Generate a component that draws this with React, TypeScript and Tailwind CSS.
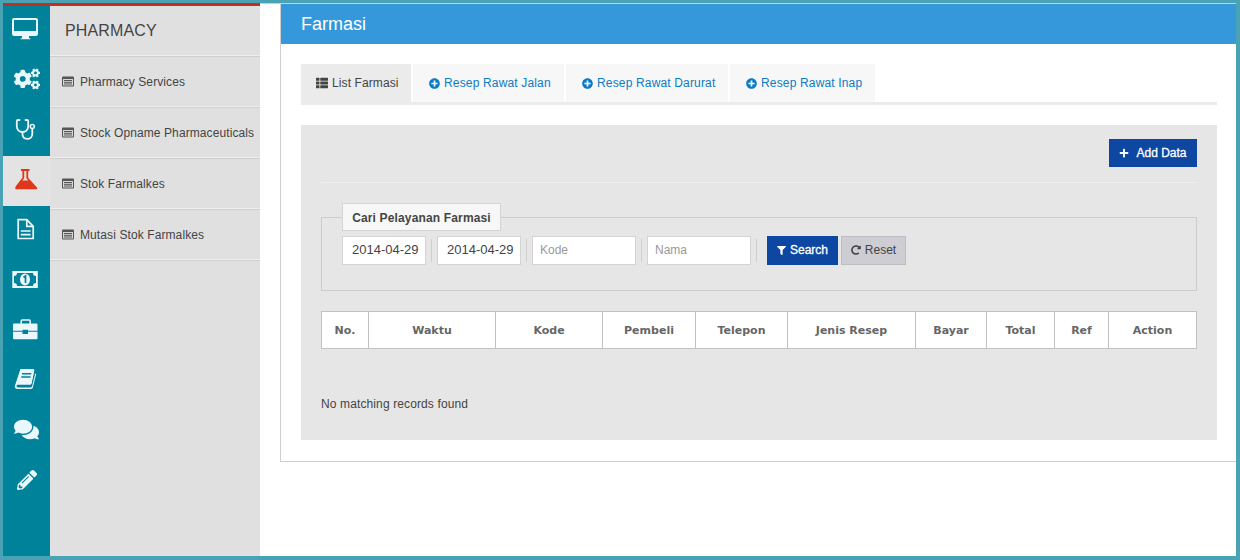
import React from "react";
import { FaCogs, FaComments, FaPencilAlt, FaThList, FaPlusCircle, FaFilter, FaRedoAlt, FaPlus } from "react-icons/fa";

const svgProps = { width: 47, height: 50, viewBox: "0 0 47 50", className: "block" };

const Desktop = () => (
  <svg {...svgProps} fill="currentColor">
    <path fillRule="evenodd" d="M11 12h22a2 2 0 0 1 2 2v14a2 2 0 0 1-2 2H11a2 2 0 0 1-2-2V14a2 2 0 0 1 2-2zm0 2v11h22V14z" />
    <path d="M19 30h7v1.5c0 .8.8 1 1.5 1v.8h-10v-.8c.7 0 1.5-.2 1.500-1z" />
  </svg>
);
const Stetho = () => (
  <svg {...svgProps} fill="none" stroke="currentColor" strokeWidth="1.8" strokeLinecap="round">
    <path d="M16.500 14h-1.500c-.8 0-1.200.5-1.200 1.200v4.800c0 3.500 2.300 6 5.700 6s5.700-2.500 5.700-6v-4.800c0-.7-.4-1.200-1.200-1.200h-1.500" />
    <path d="M19.500 26v2c0 3 2 4.800 4.800 4.800s5-1.800 5-4.800v-5.300" />
    <circle cx="29.300" cy="20.500" r="2" strokeWidth="1.500" />
  </svg>
);
const Flask = () => (
  <svg {...svgProps}>
    <rect x="18" y="13" width="8.500" height="2" fill="currentColor" />
    <path d="M20.300 15v7L13 31.500M24.300 15v7l7.500 9.500" fill="none" stroke="currentColor" strokeWidth="1.800" />
    <path d="M17.500 24.500h10l6.500 7c.6 1 .2 1.800-1 1.800H13.500c-1.200 0-1.600-.8-1-1.800z" fill="currentColor" />
  </svg>
);
const FileDoc = () => (
  <svg {...svgProps} fill="none" stroke="currentColor" strokeWidth="1.700">
    <path d="M15.200 13.600h8.600l6.400 6.800v12.100h-15z" />
    <path d="M23.800 13.600v6.800h6.400" />
    <path d="M17.800 25h9.800M17.800 28.600h9.800" />
  </svg>
);
const Money = () => (
  <svg {...svgProps}>
    <rect x="9.300" y="15" width="25.500" height="17" fill="currentColor" />
    <path d="M14 17h16a3 3 0 0 0 3 3v7a3 3 0 0 0-3 3H14a3 3 0 0 0-3-3v-7a3 3 0 0 0 3-3z" fill="#00829b" />
    <ellipse cx="22" cy="23.500" rx="5" ry="6" fill="currentColor" />
    <path d="M20.500 21.500l2-1.500v7" fill="none" stroke="#00829b" strokeWidth="1.700" />
  </svg>
);
const Briefcase = () => (
  <svg {...svgProps}>
    <path d="M18.200 18v-3a1 1 0 0 1 1-1h7a1 1 0 0 1 1 1v3" fill="none" stroke="currentColor" strokeWidth="1.500" />
    <path d="M11 17.500h22.500a1 1 0 0 1 1 1v6.300h-9.500v-1h-5.500v1H10v-6.300a1 1 0 0 1 1-1z" fill="currentColor" />
    <path d="M10 25.800h9.500v2.200h5.500v-2.200h9.500v6.500a1 1 0 0 1-1 1H11a1 1 0 0 1-1-1z" fill="currentColor" />
  </svg>
);
const Book = () => (
  <svg {...svgProps}>
    <path d="M17.500 13.300h12.500c1 0 1.400.6 1.200 1.500l-2.700 12.500c-.2.800-.7 1.200-1.500 1.200H15.300c-1 0-1.800.7-1.800 1.500s.7 1.400 1.800 1.400h12.500c.6 0 1-.3 1.200-.8l3.300-13.100.9.400-3.300 13.400c-.2 1-.9 1.600-2 1.600H14.500c-1.700 0-3-1.200-2.700-3z" fill="currentColor" />
    <path d="M17.500 13.300h12.500c1 0 1.400.6 1.200 1.500l-2.700 12.500c-.2.800-.7 1.200-1.500 1.200H15c-.8 0-1.500.2-2.300.8z" fill="currentColor" />
    <path d="M19 17.700h9.300M18.300 21h9.300" stroke="#00829b" strokeWidth="1.500" />
  </svg>
);

const rail = [
  { el: <Desktop /> },
  { el: <div className="flex h-[50px] items-center justify-center pb-[4px]"><FaCogs size={26} /></div> },
  { el: <Stetho /> },
  { el: <Flask />, active: true },
  { el: <FileDoc /> },
  { el: <Money /> },
  { el: <Briefcase /> },
  { el: <Book /> },
  { el: <div className="flex h-[50px] items-center justify-center pb-[3px]"><FaComments size={25} /></div> },
  { el: <div className="flex h-[50px] items-center justify-center pb-[3px]"><FaPencilAlt size={20} /></div> },
];

const menu = ["Pharmacy Services", "Stock Opname Pharmaceuticals", "Stok Farmalkes", "Mutasi Stok Farmalkes"];
const tabs = [
  { t: "Resep Rawat Jalan", w: "w-[151px]" },
  { t: "Resep Rawat Darurat", w: "w-[162px]" },
  { t: "Resep Rawat Inap", w: "w-[145px]" },
];
const cols = [
  ["No.", "w-[47px]"],
  ["Waktu", "w-[127px]"],
  ["Kode", "w-[107px]"],
  ["Pembeli", "w-[93px]"],
  ["Telepon", "w-[92px]"],
  ["Jenis Resep", "w-[128px]"],
  ["Bayar", "w-[71px]"],
  ["Total", "w-[68px]"],
  ["Ref", "w-[54px]"],
  ["Action", "w-[88px]"],
];

function ListIcon() {
  return (
    <svg width="12" height="11" viewBox="0 0 12 11" className="shrink-0">
      <rect x="0" y="0.5" width="12" height="10" rx="1" fill="#555" />
      <rect x="1" y="3" width="10" height="6.5" fill="#d8d8d8" />
      <path d="M2 4.500h8M2 6.300h8M2 8h8" stroke="#555" strokeWidth="1" />
    </svg>
  );
}

function Sep() {
  return <div className="mx-[5px] h-[23px] w-px bg-[#cfcfcf]" />;
}

const inputCls = "h-[29px] border border-[#d4d4d4] bg-white pb-[2px] outline-none placeholder:text-[#999]";
const dateCls = inputCls + " w-[84px] pl-[9px] text-[13px] text-[#444]";
const textCls = inputCls + " w-[104px] pl-[7px] text-[12px] text-[#444]";
const rowSep = "border-b border-b-[#cfcfcf] shadow-[inset_0_-1px_0_#efefef]";

export default function App() {
  return (
    <div className="flex h-[560px] w-[1240px] overflow-hidden border-t-[3px] border-r-[4px] border-b-[4px] border-l-[3px] border-[#4aa3b5] bg-white font-['Liberation_Sans',Arial,sans-serif] text-[#444]">
      <div className="flex w-[257px] shrink-0 flex-col">
        <div className="h-[3px] bg-[#c1301c]" />
        <div className="flex flex-1">
          <nav className="flex w-[47px] flex-col bg-[#00829b]">
            {rail.map(({ el, active }, i) => (
              <div key={i} className={"h-[50px] " + (active ? "bg-[#e3e3e3] text-[#e0361a]" : "text-[#eaf7fd]")}>
                {el}
              </div>
            ))}
          </nav>
          <aside className="w-[210px] bg-[#e0e0e0]">
            <div className={"flex h-[51px] items-center pl-[15px] text-[16px] tracking-[0.15px] text-[#444] " + rowSep}>PHARMACY</div>
            {menu.map((m) => (
              <div key={m} className={"flex h-[51px] items-center gap-[6px] pb-[1px] pl-[12px] text-[12px] tracking-[0.1px] whitespace-nowrap text-[#444] " + rowSep}>
                <ListIcon />
                <span>{m}</span>
              </div>
            ))}
          </aside>
        </div>
      </div>
      <div className="flex-1 border-t border-[#cfcfcf] pl-[20px]">
        <main className="h-[458px] border-b border-l border-[#cfcfcf]">
          <header className="flex h-[40px] items-center bg-[#3498db] pl-[20px] text-[18px] text-white">Farmasi</header>
          <div className="px-[20px] pt-[20px]">
            <div className="flex h-[41px] gap-[2px] border-b-[3px] border-[#ebebeb]">
              <div className="flex w-[110px] items-center gap-[4px] bg-[#ebebeb] pl-[15px] text-[12px] tracking-[0.1px] text-[#444]">
                <FaThList size={12} />
                <span>List Farmasi</span>
              </div>
              {tabs.map((t) => (
                <div key={t.t} className={t.w + " flex items-center gap-[4px] bg-[#f7f7f7] pl-[16px] text-[12px] tracking-[0.16px] text-[#0a7cc4]"}>
                  <FaPlusCircle size={11} />
                  <span>{t.t}</span>
                </div>
              ))}
            </div>
            <section className="mt-[20px] h-[315px] bg-[#e6e6e6] px-[20px] pt-[14px]">
              <div className="flex h-[44px] justify-end border-b border-[#efefef] pb-[15px]">
                <button className="flex w-[88px] items-center justify-center gap-[7px] bg-[#0d47a1] text-[12px] text-white [-webkit-text-stroke:0.3px]">
                  <FaPlus size={10} />
                  <span>Add Data</span>
                </button>
              </div>
              <fieldset className="relative mt-[34px] h-[74px] border border-[#cccccc] pt-[18px] pl-[20px]">
                <div className="absolute top-[-15px] left-[20px] flex h-[28px] w-[159px] items-center justify-center border border-[#d4d4d4] bg-[#f7f7f7] pt-[1px] text-[12px] font-bold tracking-[0.15px] text-[#444]">
                  Cari Pelayanan Farmasi
                </div>
                <div className="flex items-center">
                  <input readOnly value="2014-04-29" className={dateCls} />
                  <Sep />
                  <input readOnly value="2014-04-29" className={dateCls} />
                  <Sep />
                  <input readOnly placeholder="Kode" className={textCls} />
                  <Sep />
                  <input readOnly placeholder="Nama" className={textCls} />
                  <Sep />
                  <button className="ml-[5px] flex h-[29px] w-[71px] items-center justify-center gap-[4px] bg-[#0d47a1] pb-[1px] text-[12px] text-white [-webkit-text-stroke:0.3px]">
                    <FaFilter size={9} />
                    <span>Search</span>
                  </button>
                  <button className="ml-[3px] flex h-[29px] w-[65px] items-center justify-center gap-[4px] border border-[#bdbdc4] bg-[#cdcdd3] pb-[1px] text-[12px] text-[#444]">
                    <FaRedoAlt size={10} />
                    <span>Reset</span>
                  </button>
                </div>
              </fieldset>
              <table className="mt-[20px] w-[875px] table-fixed border-collapse bg-white">
                <thead>
                  <tr className="h-[37px]">
                    {cols.map(([c, w]) => (
                      <th key={c} className={w + " border border-[#c2c2c2] p-0 pt-[2px] text-center font-['DejaVu_Sans',Verdana,sans-serif] text-[11px] font-bold text-[#666]"}>{c}</th>
                    ))}
                  </tr>
                </thead>
              </table>
              <p className="mt-[46px] text-[12px] tracking-[0.12px] text-[#444]">No matching records found</p>
            </section>
          </div>
        </main>
      </div>
    </div>
  );
}
